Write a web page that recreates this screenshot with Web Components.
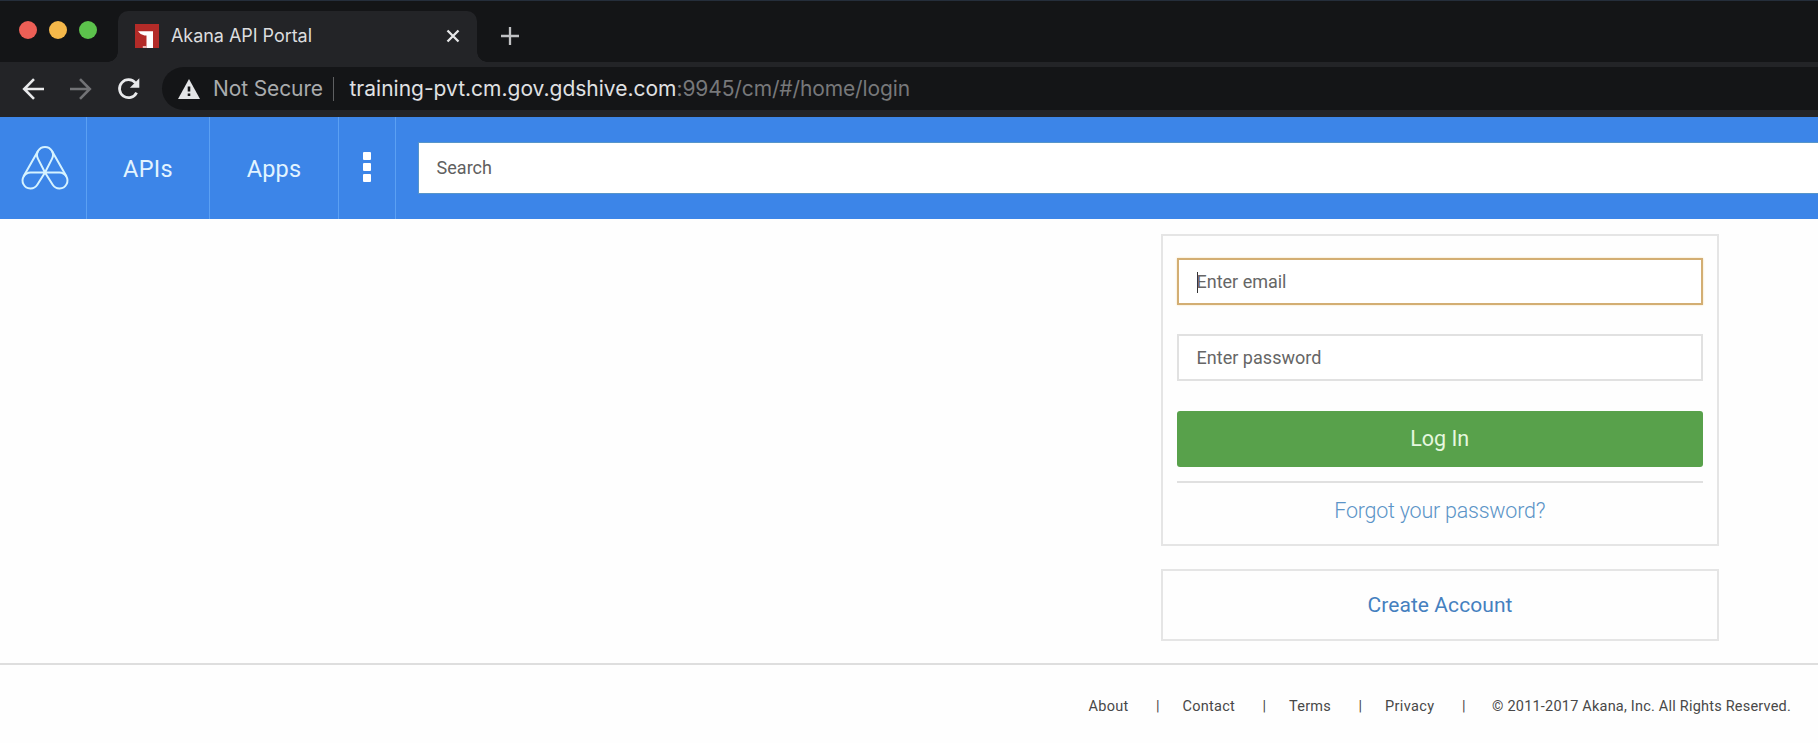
<!DOCTYPE html>
<html lang="en">
<head>
<meta charset="utf-8">
<title>Akana API Portal</title>
<style>
html,body{margin:0;height:100%;overflow:hidden;background:#fefefe}
body{font-family:Roboto,"Liberation Sans",sans-serif;color:#5c5c5c}
</style>
</head>
<body>
<browser-window>
  <tab-strip slot="chrome">Akana API Portal</tab-strip>
  <address-bar slot="chrome"></address-bar>
  <portal-header></portal-header>
  <portal-login></portal-login>
  <portal-footer></portal-footer>
</browser-window>
<script>
function define(name, html, init) {
  const template = document.createElement('template');
  template.innerHTML = html;
  customElements.define(name, class extends HTMLElement {
    constructor() {
      super();
      this.attachShadow({ mode: 'open' }).appendChild(template.content.cloneNode(true));
    }
    connectedCallback() { if (init) init(this); }
  });
}

/* A one-line label whose tracking is adjusted to reach the given measure. */
define('fit-label', `<style>:host{display:inline-block;white-space:nowrap;flex:none}</style><slot></slot>`, el => {
  const target = parseFloat(el.getAttribute('measure'));
  const count = el.textContent.length;
  const natural = el.getBoundingClientRect().width;
  if (target && count && natural) el.style.letterSpacing = ((target - natural) / count).toFixed(4) + 'px';
});

define('tab-strip', `
<style>
:host{display:flex;height:62px;background:#141517;border-top:1px solid #252e3b;box-sizing:border-box;font-family:Inter,Roboto,sans-serif}
.lights{display:flex;gap:12px;padding:20px 0 0 19px;width:98.5px}
.lights i{width:18px;height:18px;border-radius:50%;background:#ed5f56}
.lights i:nth-child(2){background:#f5b84a}
.lights i:nth-child(3){background:#5cc24c}
.tab{box-sizing:border-box;width:359px;height:51px;margin-top:10px;background:#232427;border-radius:10px 10px 0 0;display:flex;align-items:center;padding:0 17px 2px 17px;position:relative}
.tab::before,.tab::after{content:"";position:absolute;bottom:0;width:10px;height:10px}
.tab::before{left:-10px;background:radial-gradient(circle at 0 0,transparent 9.5px,#232427 10px)}
.tab::after{right:-10px;background:radial-gradient(circle at 100% 0,transparent 9.5px,#232427 10px)}
svg{display:block;flex:none}
fit-label{font-size:18px;color:#dcdddf;margin:0 auto 0 12.5px;line-height:24px}
.plus{margin:25.5px 0 0 24.5px}
</style>
<div class="lights"><i></i><i></i><i></i></div>
<div class="tab">
  <svg width="24" height="24" viewBox="0 0 24 24"><path fill="#b32b28" d="M0 0h24v24H0z"/><path fill="#fff" d="M3 7.200H18V24h-6.500V11.500H9.500Q5 10.500 3 7.200z"/><path fill="#e8b5b3" d="M7.800 22h4v2h-4z"/></svg>
  <fit-label><slot></slot></fit-label>
  <svg width="14" height="14" viewBox="0 0 14 14"><path d="M1.500 1.500l11 11m0-11l-11 11" stroke="#e6e7e8" stroke-width="2.300"/></svg>
</div>
<svg class="plus" width="18" height="18" viewBox="0 0 18 18"><path d="M9 0v18M0 9h18" stroke="#c0c1c3" stroke-width="2.300"/></svg>
`, el => {
  const label = el.shadowRoot.querySelector('fit-label');
  const width = label.getBoundingClientRect().width;
  label.style.letterSpacing = (141 - width) / el.textContent.length + 'px';
});

define('address-bar', `
<style>
:host{display:flex;align-items:center;height:55px;box-sizing:border-box;background:#232427;padding:0 0 2px 22px;font-family:Inter,Roboto,sans-serif}
svg{display:block;flex:none}
.fwd{margin-left:26px}.reload{margin-left:25px}
.pill{flex:1;height:43px;margin-left:21px;border-radius:22px 0 0 22px;background:#141517;display:flex;align-items:center;padding-left:16px}
fit-label{font-size:21px;line-height:26px}
.state{color:#a9abad;margin-left:13px}
.bar{width:1.500px;height:24px;background:#5f6062;margin:0 15.500px 0 9.500px}
.host{color:#e0e1e3}.path{color:#77787a}
</style>
<svg width="22" height="22" viewBox="0 0 22 22"><path d="M22 11H2.500M12 1.200L2.200 11l9.800 9.800" fill="none" stroke="#e9eaec" stroke-width="2.600"/></svg>
<svg class="fwd" width="22" height="22" viewBox="0 0 22 22"><path d="M0 11h19.500M10 1.200l9.800 9.800-9.800 9.800" fill="none" stroke="#727376" stroke-width="2.600"/></svg>
<svg class="reload" width="24" height="24" viewBox="0 0 24 24"><path d="M19.600 15.600A9 9 0 1 1 18.500 6" fill="none" stroke="#e9eaec" stroke-width="2.700"/><path d="M22.300 1.300v9.400h-9.400z" fill="#e9eaec"/></svg>
<div class="pill">
  <svg width="22" height="20" viewBox="0 0 22 20"><path fill="#e4e5e7" d="M11 0l11 20H0z"/><path fill="#141517" d="M9.700 7.500h2.600v5H9.700zM9.700 14.500h2.600V17H9.700z"/></svg>
  <fit-label class="state" measure="110">Not Secure</fit-label>
  <span class="bar"></span>
  <fit-label class="host" measure="327">training-pvt.cm.gov.gdshive.com</fit-label><fit-label class="path" measure="233.500">:9945/cm/#/home/login</fit-label>
</div>`);

define('portal-header', `
<style>
:host{display:flex;height:102px;background:#3c85e8;align-items:stretch;color:#e2f4ff}
.cell{box-sizing:border-box;border-right:1.500px solid #5ba0f3;display:flex;align-items:center;justify-content:center}
.logo{width:87px;padding-left:4px}.apis{width:123px}.apps{width:129px}.more{width:57px}
fit-label{font-size:23.500px;line-height:28px;padding-top:1px}
.more div{display:grid;gap:3px;margin-top:-2px}
.more i{width:8px;height:8px;background:#fff;border-radius:1px}
.search{flex:1;height:50px;margin:26px 0 0 22.500px;background:#fff;display:flex;align-items:center;padding-left:18px;box-sizing:border-box;box-shadow:0 0 0 1px #5795c9;color:#606060}
.search fit-label{font-size:18px;padding:0}
svg{display:block}
</style>
<div class="cell logo"><svg width="50" height="46" viewBox="0 0 50 46"><g fill="none" stroke="#d6f3ff" stroke-width="2"><path d="M25 27.500L17.900 13.600A8 8 0 1 1 32.100 13.600z"/><path d="M25 27.500H10.500A8 8 0 1 0 17.300 39.800z"/><path d="M25 27.500H39.500A8 8 0 1 1 32.700 39.800z"/><path d="M3.500 31.500L18 6M46.500 31.500L32 6"/></g></svg></div>
<div class="cell apis"><fit-label measure="50">APIs</fit-label></div>
<div class="cell apps"><fit-label measure="54.5">Apps</fit-label></div>
<div class="cell more"><div><i></i><i></i><i></i></div></div>
<div class="search"><fit-label measure="55.500">Search</fit-label></div>`);

define('portal-field', `
<style>
:host{display:flex;align-items:center;box-sizing:border-box;height:47px;border:2px solid #e1e1e1;padding:1px 0 0 17.500px;font-size:18px;color:#666;background:#fff}
:host([focused]){border-color:#d3ae73;box-shadow:0 0 2px #f5dfb0}
i{display:none;width:1.500px;height:21px;background:#333;margin-right:-1.500px}
:host([focused]) i{display:block}
</style><i></i><slot></slot>`);

define('portal-card', `<style>:host{display:block;box-sizing:border-box;width:558px;border:2px solid #e5e5e5;background:#fefefe}</style><slot></slot>`);

define('portal-login', `
<style>
:host{display:flex;flex-direction:column;gap:23px;padding:15px 0 0 1161px;height:444px;box-sizing:border-box;line-height:24px}
.form{height:312px;padding:22px 14.500px 0 14px}
portal-field+portal-field{margin-top:29px}
.button{height:56px;margin-top:30px;border-radius:3px;background:#58a14b;color:#e5f7df;display:flex;align-items:center;justify-content:center;font-size:21.500px}
.forgot{border-top:2px solid #e0e0e0;margin-top:14px;padding-top:16px;text-align:center;font-size:21.500px;font-weight:300;color:#5b94c7}
.create{height:72px;display:flex;align-items:center;justify-content:center;font-size:21px;color:#4580bf}
</style>
<portal-card class="form">
  <portal-field focused><fit-label measure="90">Enter email</fit-label></portal-field>
  <portal-field><fit-label measure="125">Enter password</fit-label></portal-field>
  <div class="button"><fit-label measure="59">Log In</fit-label></div>
  <div class="forgot"><fit-label measure="211">Forgot your password?</fit-label></div>
</portal-card>
<portal-card class="create"><fit-label measure="145">Create Account</fit-label></portal-card>`);

define('portal-footer', `
<style>
:host{display:flex;box-sizing:border-box;height:80px;border-top:2px solid #dedede;justify-content:flex-end;align-items:center;padding:6px 27px 0 0;font-size:14.500px;line-height:20px;color:#484848}
b{flex:none;width:4px;font-weight:400;margin:0 22.500px 0 27.500px}
</style>
<fit-label measure="40">About</fit-label><b>|</b><fit-label measure="52.500">Contact</fit-label><b>|</b><fit-label measure="42">Terms</fit-label><b>|</b><fit-label measure="49.500">Privacy</fit-label><b style="margin-right:26px">|</b><fit-label measure="299">© 2011-2017 Akana, Inc. All Rights Reserved.</fit-label>`);

define('browser-window', `
<style>:host{display:block;width:100%;height:743px;overflow:hidden}</style>
<slot name="chrome"></slot><slot></slot>`);
</script>
</body>
</html>
